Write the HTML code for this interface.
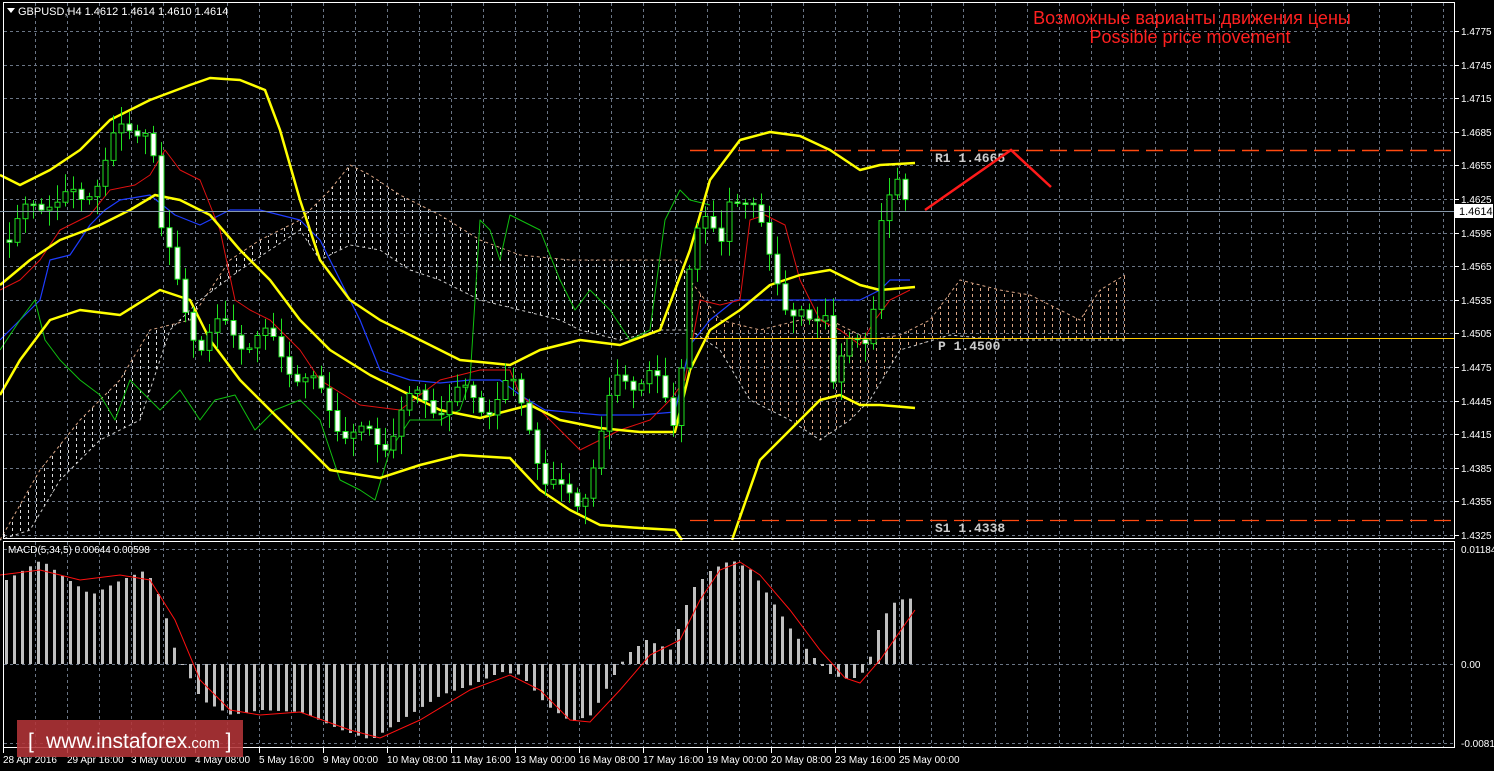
<!DOCTYPE html>
<html><head><meta charset="utf-8"><style>
html,body{margin:0;padding:0;background:#000;width:1494px;height:771px;overflow:hidden}
svg{display:block}
text{font-family:"Liberation Sans",sans-serif;}
</style></head><body>
<svg id="s" width="1494" height="771" xmlns="http://www.w3.org/2000/svg">
<defs>
<pattern id="hatch" x="0" y="0" width="8" height="6" patternUnits="userSpaceOnUse">
<line x1="4.5" y1="0" x2="4.5" y2="3" stroke="#d9a585" stroke-width="1"/>
</pattern>
<pattern id="hatchw" x="0" y="0" width="8" height="6" patternUnits="userSpaceOnUse">
<line x1="4.5" y1="0" x2="4.5" y2="3" stroke="#dcdcdc" stroke-width="1"/>
</pattern>
<clipPath id="cl"><rect x="0" y="0" width="690" height="540"/></clipPath>
<clipPath id="cr"><rect x="690" y="0" width="800" height="540"/></clipPath>
</defs>
<rect width="1494" height="771" fill="#000"/>
<g id="grid"></g>
<polygon id="cloud" fill="url(#hatchw)" clip-path="url(#cl)"/>
<polygon id="cloud2" fill="url(#hatch)" clip-path="url(#cr)"/>
<g id="lines"></g>
<g id="candles"></g>
<g id="macd"></g>
<rect x="3.5" y="2.5" width="1451" height="536" fill="none" stroke="#fff"/>
<rect x="3.5" y="541.5" width="1451" height="206" fill="none" stroke="#fff"/>
<line x1="0" y1="211.5" x2="1454" y2="211.5" stroke="#8899aa"/>
<rect x="1455" y="204" width="38" height="14" fill="#fff"/>
<text x="1459" y="215" font-size="11" fill="#000">1.4614</text>
<line x1="690" y1="150.5" x2="1454" y2="150.5" stroke="#ff4a10" stroke-width="1.5" stroke-dasharray="17,7"/>
<line x1="690" y1="520.5" x2="1454" y2="520.5" stroke="#ff4a10" stroke-width="1.2" stroke-dasharray="17,7"/>
<line x1="690" y1="338.5" x2="1454" y2="338.5" stroke="#ffcc00" stroke-width="1"/>
<g font-size="13" fill="#ccc" font-weight="bold">
<text x="935" y="162" style="font-family:'Liberation Mono',monospace">R1 1.4665</text>
<text x="938" y="350" style="font-family:'Liberation Mono',monospace">P 1.4500</text>
<text x="935" y="532" style="font-family:'Liberation Mono',monospace">S1 1.4338</text>
</g>
<polyline points="925,210 1011,150 1051,187" fill="none" stroke="#ff1a1a" stroke-width="2.5"/>
<text x="1192" y="24" font-size="18" fill="#ff2020" text-anchor="middle">Возможные варианты движения цены</text>
<text x="1190" y="43" font-size="18" fill="#ff2020" text-anchor="middle">Possible price movement</text>
<path d="M7,8 L15,8 L11,13Z" fill="#fff"/>
<text x="18" y="15" font-size="11" fill="#fff">GBPUSD,H4  1.4612 1.4614 1.4610 1.4614</text>
<text x="8" y="553" font-size="10" fill="#fff">MACD(5,34,5) 0.00644 0.00598</text>
<g id="axis" font-size="10" fill="#fff"></g>
<rect x="17" y="720" width="226" height="37" fill="#b33438" opacity="0.88"/>
<text x="28" y="748" font-size="21" fill="#fff">[ </text>
<text x="46" y="748" font-size="21" fill="#fff">www.instaforex<tspan font-size="15">.com</tspan> ]</text>
</svg>
<script>
var NS="http://www.w3.org/2000/svg";
function el(p,tag,a){var e=document.createElementNS(NS,tag);for(var key in a)e.setAttribute(key,String(a[key]));document.getElementById(p).appendChild(e);return e;}
function pts(a){return a.map(function(p){return p[0]+','+p[1]}).join(' ');}
function interp(kp,xx){if(xx<=kp[0][0])return kp[0][1];for(var j=0;j<kp.length-1;j++){if(xx>=kp[j][0]&&xx<=kp[j+1][0]){var f=(xx-kp[j][0])/(kp[j+1][0]-kp[j][0]);return kp[j][1]+f*(kp[j+1][1]-kp[j][1]);}}return kp[kp.length-1][1];}
var gx,gi,gy,tx;
for(gx=35;gx<1454;gx+=32){el('grid','line',{x1:gx+.5,y1:3,x2:gx+.5,y2:538,stroke:'#6a7585','stroke-dasharray':'3,3'});el('grid','line',{x1:gx+.5,y1:542,x2:gx+.5,y2:747,stroke:'#6a7585','stroke-dasharray':'3,3'});}
for(gi=0;gi<16;gi++){gy=Math.round(31+gi*33.6);el('grid','line',{x1:4,y1:gy+.5,x2:1454,y2:gy+.5,stroke:'#6a7585','stroke-dasharray':'3,3'});el('grid','line',{x1:1454,y1:gy+.5,x2:1459,y2:gy+.5,stroke:'#fff'});
tx=el('axis','text',{x:1461,y:gy+4});tx.textContent=(1.4775-gi*0.003).toFixed(4);}
[[549,'0.01184'],[664,'0.00'],[743,'-0.00819']].forEach(function(a){el('grid','line',{x1:4,y1:a[0]+.5,x2:1454,y2:a[0]+.5,stroke:'#6a7585','stroke-dasharray':'3,3'});var tt=el('axis','text',{x:1461,y:a[0]+4});tt.textContent=a[1];});
var tl=["28 Apr 2016","29 Apr 16:00","3 May 00:00","4 May 08:00","5 May 16:00","9 May 00:00","10 May 08:00","11 May 16:00","13 May 00:00","16 May 08:00","17 May 16:00","19 May 00:00","20 May 08:00","23 May 16:00","25 May 00:00"];
tl.forEach(function(s,n){var lx=3+n*64;el('axis','line',{x1:lx+.5,y1:748,x2:lx+.5,y2:753,stroke:'#fff'});var tt=el('axis','text',{x:lx,y:763});tt.textContent=s;});
var ct=[[0,540],[40,470],[80,420],[120,380],[150,330],[190,320],[230,260],[260,240],[300,220],[330,190],[350,165],[370,175],[400,195],[440,215],[480,240],[520,255],[570,260],[620,260],[680,260],[690,280],[720,320],[760,330],[800,320],[830,320],[870,340],[900,335],[930,320],[960,280],[1000,290],[1030,295],[1060,310],[1080,320],[1100,290],[1125,275]];
var cb=[[1125,340],[1050,340],[1000,340],[950,335],[900,350],[870,400],[850,420],[820,440],[790,420],[750,400],[720,350],[690,330],[660,330],[620,340],[580,330],[560,320],[520,310],[480,300],[440,280],[410,270],[380,250],[350,245],[320,260],[300,230],[270,250],[240,270],[200,300],[170,330],[140,420],[100,440],[60,480],[30,530],[0,540]];
document.getElementById('cloud').setAttribute('points',pts(ct.concat(cb)));
document.getElementById('cloud2').setAttribute('points',pts(ct.concat(cb)));
el('lines','polyline',{points:pts(ct),fill:'none',stroke:'#d9a585','stroke-width':1,'stroke-dasharray':'3,3'});
el('lines','polyline',{points:pts(cb),fill:'none',stroke:'#ccc','stroke-width':1,'stroke-dasharray':'3,3'});
function L(a,c,w){el('lines','polyline',{points:pts(a),fill:'none',stroke:c,'stroke-width':w,'stroke-linejoin':'round'});}
L([[0,340],[20,320],[40,300],[50,260],[70,255],[90,225],[105,210],[120,200],[150,195],[175,215],[200,225],[230,210],[260,210],[300,220],[320,240],[340,280],[360,320],[380,370],[410,380],[440,383],[470,380],[500,380],[520,395],[545,410],[600,415],[640,415],[675,412],[690,345],[710,320],[735,300],[760,300],[800,300],[860,300],[880,290],[890,280],[910,280]],'#1e3cff',1.2);
L([[0,290],[20,280],[40,260],[60,230],[90,215],[110,190],[135,185],[150,175],[165,150],[180,170],[200,180],[220,230],[235,300],[250,310],[270,320],[300,350],[320,380],[360,405],[400,410],[440,380],[480,370],[510,370],[520,395],[540,410],[560,430],[580,450],[600,440],[620,430],[650,420],[670,400],[685,380],[700,300],[720,305],[740,300],[750,220],[765,215],[785,225],[800,280],[820,320],[840,330],[860,345],[875,320],[890,300],[910,290]],'#e01010',1);
L([[0,350],[20,320],[35,300],[45,340],[60,360],[80,380],[100,395],[115,420],[130,380],[160,410],[180,390],[200,420],[215,400],[235,395],[255,430],[275,410],[300,400],[320,420],[340,480],[360,490],[375,500],[390,450],[410,420],[440,420],[460,410],[470,380],[480,220],[490,230],[500,260],[510,215],[520,220],[540,230],[560,280],[575,310],[590,290],[610,310],[630,340],[650,330],[665,220],[680,190],[690,200],[710,205]],'#10c010',1);
var Y='#ffff00';
L([[0,175],[20,185],[50,170],[80,150],[110,120],[150,100],[190,85],[210,78],[240,80],[265,90],[280,130],[300,200],[320,260],[350,300],[380,320],[420,340],[460,360],[510,365],[540,350],[580,340],[620,345],[660,330],[690,250],[710,180],[740,140],[770,132],[800,136],[830,150],[860,170],[880,165],[915,163]],Y,2.5);
L([[0,395],[20,360],[50,320],[80,310],[120,315],[160,290],[190,300],[210,340],[240,380],[270,410],[300,440],[330,470],[380,478],[420,465],[460,455],[510,458],[540,490],[570,510],[600,525],[640,528],[675,530],[682,540]],Y,2.5);
L([[732,540],[760,460],[790,430],[820,400],[840,395],[860,405],[880,405],[915,408]],Y,2.5);
L([[0,285],[30,260],[60,240],[100,225],[130,210],[155,195],[180,200],[210,215],[240,250],[270,280],[300,320],[330,350],[370,375],[410,395],[440,410],[480,418],[530,405],[560,420],[600,428],[640,432],[675,432],[690,370],[710,330],[740,310],[770,285],[800,275],[830,270],[860,285],[880,290],[915,287]],Y,2.5);
var ck=[[5,240],[30,215],[50,190],[80,210],[110,140],[130,140],[150,110],[160,230],[175,285],[200,340],[230,330],[260,340],[290,360],[320,400],[340,420],[360,440],[380,445],[400,410],[430,400],[460,400],[490,400],[510,390],[530,420],[545,480],[560,500],[580,495],[600,445],[620,370],[650,380],[665,405],[675,420],[690,250],[700,230],[720,240],[730,180],[745,210],[760,230],[775,260],[790,320],[810,330],[825,300],[830,375],[845,355],[860,350],[870,330],[880,210],[895,190],[905,212]];
var prevC=interp(ck,1);
for(var cx=9;cx<=905;cx+=8){
 var cc=interp(ck,cx)+16*Math.sin(cx*1.7);
 cc=Math.max(20,Math.min(530,cc));
 var oo=prevC;prevC=cc;
 var tp=Math.min(oo,cc),bt=Math.max(oo,cc);
 var wt=tp-4-14*(0.5+0.5*Math.sin(cx*0.9)),wb=bt+4+14*(0.5+0.5*Math.cos(cx*1.3));
 el('candles','line',{x1:cx+.5,y1:wt.toFixed(1),x2:cx+.5,y2:wb.toFixed(1),stroke:'#20e020'});
 var hh=Math.max(bt-tp,1.5);
 el('candles','rect',{x:cx-2,y:tp.toFixed(1),width:5,height:hh.toFixed(1),fill:cc>oo?'#fff':'#000',stroke:'#20e020','stroke-width':1});
}
var hk=[[5,580],[40,560],[60,575],[90,595],[120,580],[145,570],[160,600],[175,655],[190,680],[200,700],[230,715],[260,710],[300,712],[340,730],[370,740],[400,720],[440,695],[470,685],[500,672],[520,675],[545,705],[570,722],[590,715],[610,680],[625,655],[645,640],[670,650],[690,590],[710,570],[730,560],[750,570],[770,600],[790,630],[810,655],[830,675],[850,680],[865,670],[880,620],[895,600],[915,598]];
for(var mx=5;mx<=915;mx+=8){var my=interp(hk,mx);el('macd','rect',{x:mx,y:Math.min(my,664).toFixed(1),width:3,height:Math.max(Math.abs(664-my),1).toFixed(1),fill:'#c0c0c0'});}
el('macd','polyline',{points:pts([[0,575],[40,570],[80,580],[120,575],[150,580],[175,620],[200,680],[230,710],[260,715],[300,712],[350,730],[380,738],[420,720],[470,690],[510,675],[540,690],[570,720],[590,722],[620,690],[650,655],[680,640],[700,600],[720,570],[740,562],[760,575],[790,610],[820,650],[845,678],[860,683],[880,660],[915,610]]),fill:'none',stroke:'#ff1010','stroke-width':1});
</script>
</body></html>
